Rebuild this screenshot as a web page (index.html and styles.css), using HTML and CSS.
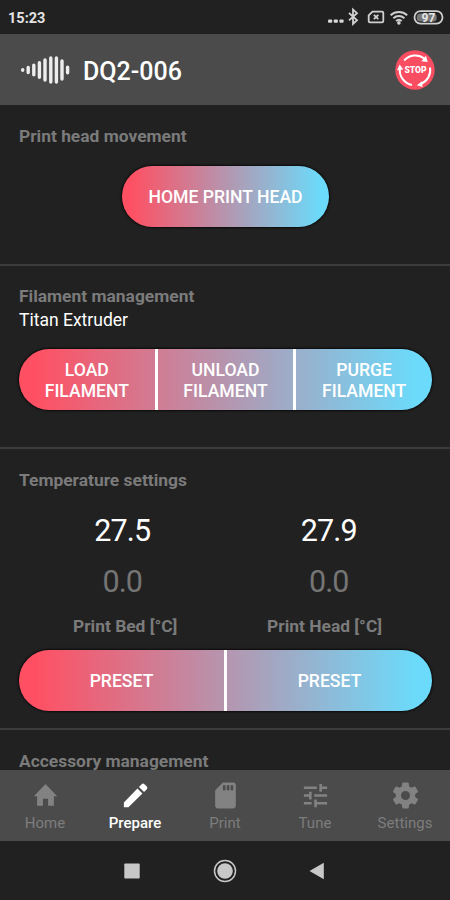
FILE: index.html
```html
<!DOCTYPE html>
<html lang="en">
<head>
  <meta charset="UTF-8" />
  <meta name="viewport" content="width=device-width, initial-scale=1.0"/>
  <title>DQ2-006</title>
  <link rel="stylesheet" href="styles.css">
</head>
<body>

  <div class="status-bar">
    <span class="clock">15:23</span>
    <svg class="status-icons" viewBox="0 0 118 20" width="118" height="20">
      <g fill="#d8d8d8">
        <rect x="0" y="12.4" width="4.200" height="3.400" rx="1"/>
        <rect x="5.700" y="12.4" width="4.200" height="3.400" rx="1"/>
        <rect x="11.400" y="12.4" width="4.200" height="3.400" rx="1"/>
      </g>
      <g fill="none" stroke="#d0d0d0" stroke-width="1.8">
        <path d="M21 6l8 7.200-4 3.800V2.600l4 3.600-8 7.200"/>
        <path d="M44.500 4.600h9.500a1.300 1.300 0 0 1 1.300 1.300v8.200a1.300 1.300 0 0 1-1.300 1.300h-12a1.300 1.300 0 0 1-1.300-1.300V8.400z"/>
        <path d="M45.900 7.800l4.400 4.400m0-4.400l-4.400 4.400"/>
        <path d="M62.600 8.200a12.500 12.500 0 0 1 16.600 0M65.400 11.200a8.300 8.300 0 0 1 11 0M68.100 14a4.200 4.200 0 0 1 5.600 0" stroke-width="2"/>
        <rect x="86.500" y="4.200" width="28" height="12.400" rx="6"/>
      </g>
      <circle cx="70.900" cy="15.900" r="1.800" fill="#d0d0d0"/>
      <rect x="88.700" y="6.400" width="20" height="8" rx="3.500" fill="#777"/>
      <text class="battery-text" x="100.500" y="14.700" text-anchor="middle">97</text>
    </svg>
  </div>

  <div class="header">
    <svg class="logo" viewBox="0 0 50 30" width="50" height="30" stroke="#ededed" stroke-width="3.400" stroke-linecap="round">
      <path d="M2.700 14.700v.6M8.200 12.500v5M13.800 10.300v9.400M19.400 7.700v14.600M25 5v20M30.800 3v24M36.400 3v24M42 6v18M47.600 12.200v5.600"/>
    </svg>
    <h1 class="title">DQ2-006</h1>
    <svg class="stop" viewBox="0 0 40 40" width="40" height="40">
      <circle cx="20" cy="20" r="19.700" fill="#f94d61"/>
      <g fill="none" stroke="#fff" stroke-width="2">
        <path d="M9.200 10.500A14.800 14.800 0 0 1 29.500 8.700"/>
        <path d="M35 17.500A15 15 0 0 1 26 34"/>
        <path d="M17 35A15 15 0 0 1 5 18"/>
      </g>
      <g fill="#fff">
        <path d="M31 5.800l1.700 6.200-6.400-.8z"/>
        <path d="M21.800 35.200l5.200-3.900.5 5.600z"/>
        <path d="M4.600 14.500l3.800 5-6.300.7z"/>
      </g>
      <text class="stop-text" x="20.500" y="23.200" text-anchor="middle">STOP</text>
    </svg>
  </div>

  <div class="content">
    <section class="section movement">
      <h2 class="section-title">Print head movement</h2>
      <button class="pill home-btn">HOME PRINT HEAD</button>
    </section>

    <section class="section filament">
      <h2 class="section-title">Filament management</h2>
      <p class="extruder">Titan Extruder</p>
      <div class="pill group">
        <button>LOAD<br>FILAMENT</button>
        <button>UNLOAD<br>FILAMENT</button>
        <button>PURGE<br>FILAMENT</button>
      </div>
    </section>

    <section class="section temperature">
      <h2 class="section-title">Temperature settings</h2>
      <div class="temps current">
        <span>27.5</span>
        <span>27.9</span>
      </div>
      <div class="temps target">
        <span>0.0</span>
        <span>0.0</span>
      </div>
      <div class="labels">
        <span>Print Bed [°C]</span>
        <span>Print Head [°C]</span>
      </div>
      <div class="pill group">
        <button>PRESET</button>
        <button>PRESET</button>
      </div>
    </section>

    <section class="section accessory">
      <h2 class="section-title">Accessory management</h2>
    </section>
  </div>

  <div class="tabs">
    <a class="tab">
      <svg viewBox="0 0 24 24"><path d="M10 20v-5.500h4V20h4.500v-7.500H21L12 3l-9 9.500h2.500V20z"/></svg>
      <span>Home</span>
    </a>
    <a class="tab active">
      <svg viewBox="0 0 24 24"><path d="M3 17.500V21h3.500L17.400 10.500l-3.900-4L3 17.500zM20.800 7.200a1.700 1.700 0 0 0 0-2.100l-1.900-1.900a1.700 1.700 0 0 0-2.100 0l-2.100 2.200 3.900 3.900 2.200-2.100z"/></svg>
      <span>Prepare</span>
    </a>
    <a class="tab">
      <svg viewBox="0 0 24 24"><path d="M18 2h-8L4.020 8 4 20c0 1.100.9 2 2 2h12c1.100 0 2-.9 2-2V4c0-1.100-.9-2-2-2zm-6 6h-2V4h2v4zm3 0h-2V4h2v4zm3 0h-2V4h2v4z"/></svg>
      <span>Print</span>
    </a>
    <a class="tab">
      <svg viewBox="0 0 24 24"><path d="M3 17v2h6v-2H3zM3 5v2h10V5H3zm10 16v-2h8v-2h-8v-2h-2v6h2zM7 9v2H3v2h4v2h2V9H7zm14 4v-2H11v2h10zm-6-4h2V7h4V5h-4V3h-2v6z"/></svg>
      <span>Tune</span>
    </a>
    <a class="tab">
      <svg viewBox="0 0 24 24"><path d="M19.430 12.980c.04-.32.070-.64.070-.98s-.03-.66-.07-.98l2.110-1.650c.19-.15.240-.42.120-.64l-2-3.460c-.12-.22-.39-.3-.61-.22l-2.490 1c-.52-.4-1.080-.73-1.690-.98l-.38-2.650C14.460 2.180 14.250 2 14 2h-4c-.25 0-.46.180-.49.420l-.38 2.650c-.61.250-1.170.59-1.690.98l-2.490-1c-.23-.09-.49 0-.61.220l-2 3.460c-.13.220-.07.490.120.640l2.110 1.650c-.04.320-.07.650-.07.980s.030.660.070.980l-2.110 1.650c-.19.150-.24.420-.12.640l2 3.460c.12.220.39.300.61.220l2.490-1c.52.400 1.080.730 1.690.980l.38 2.650c.03.240.24.420.49.420h4c.25 0 .46-.18.490-.42l.38-2.650c.61-.25 1.170-.59 1.690-.98l2.490 1c.23.090.49 0 .61-.22l2-3.460c.12-.22.070-.49-.12-.64l-2.110-1.650zM12 15.500a3.500 3.500 0 1 1 0-7 3.500 3.500 0 0 1 0 7z"/></svg>
      <span>Settings</span>
    </a>
  </div>

  <!-- android system buttons -->
  <div class="nav-bar">
    <svg viewBox="0 0 26 26"><rect x="5.300" y="5.500" width="15.400" height="15" rx=".8"/></svg>
    <svg viewBox="0 0 26 26"><circle cx="13" cy="13" r="7.800"/><circle class="ring" cx="13" cy="13" r="10.500"/></svg>
    <svg viewBox="0 0 26 26"><path d="M4.500 13L18.800 4.800v16.400z"/></svg>
  </div>

</body>
</html>
```

FILE: styles.css
```css
* {
  box-sizing: border-box;
}

body {
  margin: 0;
  height: 900px;
  display: flex;
  flex-direction: column;
  overflow: hidden;
  background: #212121;
  color: #fff;
  font-family: Roboto, 'Liberation Sans', sans-serif;
}

h1, h2, p {
  margin: 0;
}

.status-bar {
  height: 34px;
  display: flex;
  justify-content: space-between;
  align-items: center;
  padding: 2px 4px 0 8px;
}

.clock {
  font-size: 14.5px;
  font-weight: 700;
  line-height: 17px;
  color: #e4e4e4;
}

.status-icons {
  margin-bottom: 2px;
}

.battery-text {
  font-size: 12px;
  font-weight: 700;
  fill: #e6e6e6;
}

.header {
  height: 71px;
  flex-shrink: 0;
  display: flex;
  align-items: center;
  padding: 0 15px 0 20px;
  background: #4b4b4b;
}

.logo {
  fill: none;
}

.title {
  margin: 4px 0 0 13px;
  font-size: 25px;
  font-weight: 500;
  line-height: 30px;
}

.stop {
  margin-left: auto;
}

.stop-text {
  font-size: 8.6px;
  font-weight: 900;
  fill: #fff;
}

.content {
  flex: 1;
  min-height: 0;
  overflow: hidden;
}

.section {
  padding: 0 18px 0 19px;
  border-bottom: 2px solid #3c3c3c;
}

.section-title {
  font-size: 17.4px;
  font-weight: 700;
  line-height: 22px;
  color: #7b7b7b;
}

.movement {
  height: 161px;
  padding-top: 20px;
}

.filament {
  height: 183px;
  padding-top: 19px;
}

.temperature {
  height: 281px;
  padding-top: 20px;
}

.accessory {
  padding-top: 20px;
  border-bottom: none;
}

.pill {
  height: 61px;
  border-radius: 31px;
  background: linear-gradient(90deg, #ff5063 4%, #6cdafa 96%);
  box-shadow: 0 0 2px 1px #0b0b0b;
  overflow: hidden;
}

button {
  padding: 2px 0 0;
  border: none;
  background: none;
  color: #fff;
  font-family: inherit;
  font-size: 17.6px;
  font-weight: 500;
  line-height: 21px;
  cursor: pointer;
}

.home-btn {
  display: block;
  width: 207px;
  margin: 19px auto 0;
}

.extruder {
  font-size: 17.5px;
  line-height: 27px;
}

.group {
  display: flex;
}

.group button {
  flex: 1;
}

.group button + button {
  border-left: 3px solid #fff;
}

.filament .group {
  margin-top: 15px;
}

.temps {
  display: flex;
  text-align: center;
  font-size: 30.5px;
  line-height: 36px;
  letter-spacing: -0.9px;
}

.temps span {
  flex: 1;
}

.current {
  margin-top: 22px;
}

.target {
  margin-top: 15px;
  color: #757575;
}

.labels {
  display: flex;
  justify-content: space-between;
  margin-top: 15px;
  padding: 0 50px 0 54px;
  font-size: 17.4px;
  font-weight: 700;
  line-height: 22px;
  color: #7b7b7b;
}

.temperature .group {
  margin-top: 13px;
}

.tabs {
  height: 71px;
  flex-shrink: 0;
  display: flex;
  background: #4b4b4b;
}

.tab {
  flex: 1;
  display: flex;
  flex-direction: column;
  align-items: center;
  padding-top: 10px;
  font-size: 15px;
  line-height: 20px;
  color: #7d7d7d;
}

.tab svg {
  width: 31px;
  height: 31px;
  margin-bottom: 2px;
  fill: #828282;
}

.tab.active {
  color: #fff;
  font-weight: 500;
}

.tab.active svg {
  fill: #fff;
}

.nav-bar {
  height: 59px;
  flex-shrink: 0;
  display: flex;
  justify-content: center;
  align-items: center;
  gap: 67px;
}

.nav-bar svg {
  width: 26px;
  height: 26px;
  fill: #c8c8c8;
}

.nav-bar .ring {
  fill: none;
  stroke: #c8c8c8;
  stroke-width: 1.5;
}
```
